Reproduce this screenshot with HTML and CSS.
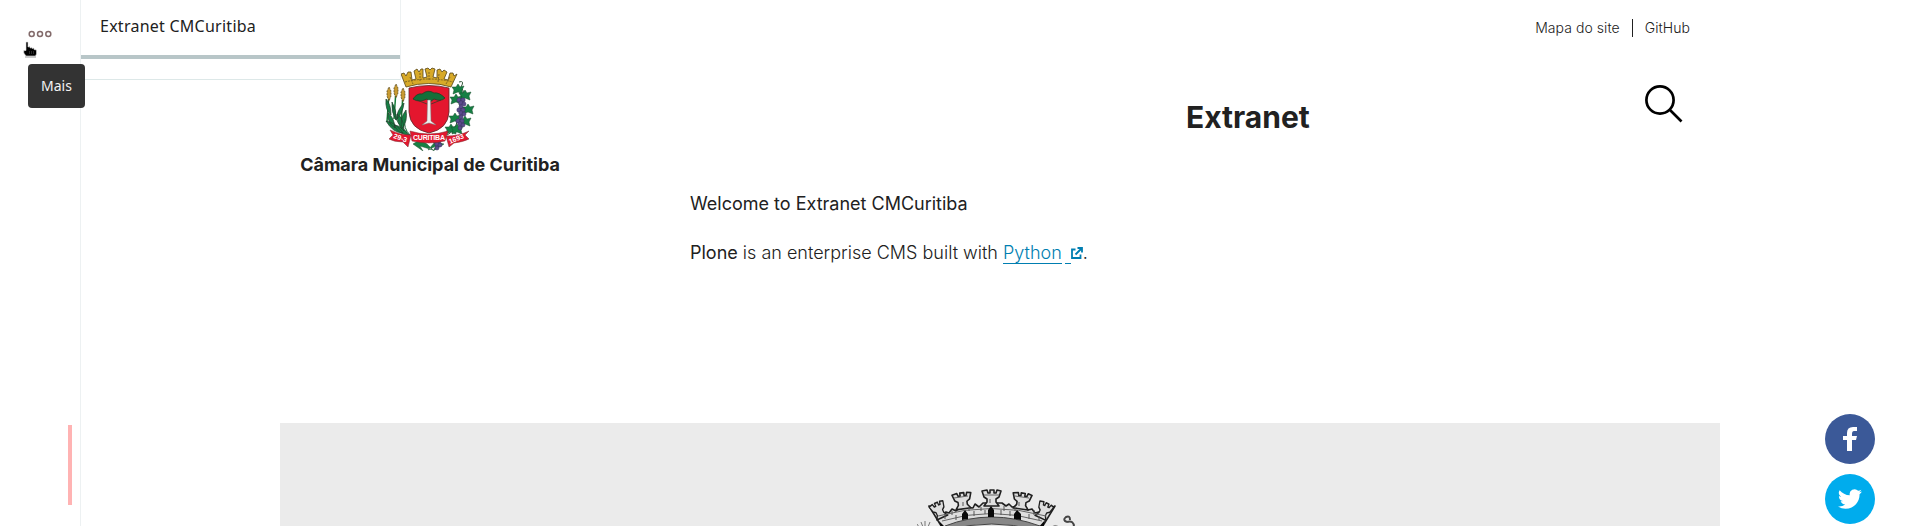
FILE: index.html
```html
<!DOCTYPE html>
<html lang="pt-BR">
<head>
<meta charset="utf-8">
<title>Extranet CMCuritiba</title>
<link rel="stylesheet" href="styles.css">
</head>
<body>
<div class="app">
  <aside class="toolbar">
    <button class="more" aria-label="Mais">
      <svg width="24" height="8" viewBox="0 0 24 8" fill="none" stroke="#826a6a" stroke-width="1.5"><circle cx="3.7" cy="4" r="2.5"/><circle cx="12" cy="4" r="2.5"/><circle cx="20.3" cy="4" r="2.5"/></svg>
    </button>
    <span class="handle"></span>
    <svg class="cursor" width="16" height="17" viewBox="0 0 16 17"><path d="M3 1H5V6L7 5.5V7L9 6.5V7.5L11 7V8.5L13.5 9V13L12.5 15H3L.8 12V9.5H3z" fill="#000" stroke="#ddd" stroke-width=".6"/><path d="M2 16H13" stroke="#999" stroke-width="1"/><path d="M6.5 10V13M8.5 10V13M10.5 10V13" stroke="#555" stroke-width=".5"/></svg>
    <span class="tooltip">Mais</span>
  </aside>
  <div class="page">
    <section class="menu-panel"><h2>Extranet CMCuritiba</h2><div class="menu-body"></div></section>
    <header>
      <nav class="tools"><a>Mapa do site</a><a>GitHub</a></nav>
      <div class="brand-row">
        <div class="brand">
          <svg class="crest" width="90" height="84" viewBox="0 0 90 84">
            <defs>
              <g id="wheat"><path d="M0 34L2 5" stroke="#157a38" stroke-width="1.5"/><path d="M2-1L4 3V8L2 13L0 8V3z" fill="#c79a32" stroke="#5b4b22" stroke-width=".8" stroke-dasharray="2 1"/></g>
              <path id="leaf" d="M0-5L2-2L6-3L4 1L5 5L0 3L-5 5L-4 1L-6-2L-2-2z" fill="#158044" stroke="#174b2b" stroke-width=".5"/>
              <g id="grapes" fill="#5b4b8d" stroke="#35305d" stroke-width=".5"><circle cx="-2" r="2.2"/><circle cx="2" r="2.2"/><circle cy="3" r="2.3"/><circle cx="3" cy="4" r="2"/><circle cy="7" r="2"/></g>
            </defs>
            <g fill="none">
              <use href="#wheat" x="2" y="21"/><use href="#wheat" x="9" y="18"/><use href="#wheat" x="16" y="22"/>
              <g fill="#168044" stroke="#233b2b" stroke-width=".7">
                <path d="M1 32Q6 37 6 48Q0 43 1 32zM3 46Q9 50 10 61Q2 56 3 46zM7 35Q12 43 11 53Q6 45 7 35zM19 36Q18 46 11 53Q12 43 19 36zM12 47Q19 51 19 64Q12 58 12 47zM21 43Q23 54 17 62Q14 52 21 43zM1 54Q10 55 18 66Q8 66 1 54zM9 58Q18 59 24 68Q14 68 9 58z"/>
              </g>
              <path d="M20 52Q18 61 25 68M8 40Q10 56 22 66" stroke="#1a6538"/>
            </g>
            <path d="M74 15Q80 13 76 20Q83 29 74 37Q82 49 72 55Q70 64 62 68" fill="none" stroke="#315437"/>
            <use href="#leaf" x="73" y="22"/><use href="#leaf" x="80" y="28"/><use href="#leaf" x="71" y="32"/><use href="#leaf" x="83" y="42"/><use href="#leaf" x="70" y="51"/><use href="#leaf" x="80" y="54"/><use href="#leaf" x="66" y="62"/><use href="#leaf" x="72" y="62"/>
            <use href="#grapes" x="76" y="33"/><use href="#grapes" x="76" y="43"/><use href="#grapes" x="75" y="54"/>
            <path d="M21 20L16 7L19 6L21 9L23 5L26 5L27 13L31 12L29 4L32 2L34 5L36 2L38 2L38 11L42 10L40 2L43 1L45 3L47 1L50 2L48 10L52 11L52 3L55 2L57 5L59 3L62 5L59 12L63 13L65 6L68 6L69 9L72 7L66 20Q44 13 21 20z" fill="#d7a928" stroke="#574516" stroke-width=".8"/>
            <path d="M20 15Q44 9 68 15M25 10L28 17M35 6V15M44 5V14M54 7L53 15M65 10L61 17" fill="none" stroke="#806520" stroke-dasharray="2 1"/>
            <path d="M24 21Q44 16 64 21V45Q63 62 44 66Q25 62 24 45z" fill="#e4162e" stroke="#5d2729" stroke-width=".8"/>
            <path d="M28 32Q32 26 37 27Q43 22 49 26Q54 25 60 31Q56 35 49 32L45 35L42 32Q34 36 28 32z" fill="#137039" stroke="#263d25" stroke-width=".8"/>
            <path d="M32 33L42 37M56 33L46 37" stroke="#263d25" stroke-width=".7"/>
            <path d="M42.5 33H45.5L46 54L51 58L44 56L37 58L42 54z" fill="#eee" stroke="#777" stroke-width=".5"/>
            <g fill="#178044" stroke="#285034" stroke-width=".5"><path d="M28 77Q35 71 42 77L48 83L35 79L38 84zM59 77L50 75L43 83L51 79L48 84z"/></g>
            <use href="#grapes" x="52" y="74"/>
            <path d="M5 63Q15 68 26 68L23 80L18 75Q9 75 4 72L8 68zM84 64Q74 69 61 69L64 80L69 76Q78 75 84 72L80 68z" fill="#e2172f" stroke="#763033" stroke-width=".5"/>
            <path d="M25 64Q44 70 63 64L60 74Q44 78 27 74z" fill="#e2172f" stroke="#763033" stroke-width=".5"/>
            <g class="ribbon-text"><text x="28" y="73" textLength="32">CURITIBA</text><text x="8" y="71" transform="rotate(18 8 71)">29-3</text><text x="65" y="77" transform="rotate(-22 65 77)">1693</text></g>
          </svg>
          <strong>Câmara Municipal de Curitiba</strong>
        </div>
        <h1>Extranet</h1>
        <svg class="search" width="40" height="40" viewBox="0 0 40 40" fill="none" stroke="#000" stroke-width="2.7"><circle cx="16" cy="15" r="13.6"/><path d="M25.5 24.5L37.5 36.5"/></svg>
      </div>
    </header>
    <main>
      <p class="welcome">Welcome to Extranet CMCuritiba</p>
      <p><b>Plone</b> is an enterprise CMS built with <a>Python</a><span class="external"><svg width="12" height="12" viewBox="0 0 12 12" fill="none" stroke="#007eb1" stroke-width="1.8"><path d="M4.5 2.5H1V11H9.5V7.5M6.5 1H11V5.5M11 1L4.5 7.5"/></svg></span>.</p>
    </main>
    <figure>
      <svg class="seal" width="166" height="38" viewBox="0 0 166 38">
        <defs><path id="tower" d="M-9-1L-4-2L-3 1H-1V-2H3V1H5L6-2L10-1L8 5L5 7V10L8 14H-7L-4 10V7L-7 5z"/></defs>
        <g fill="#dedede" stroke="#202020" stroke-width="1.6" stroke-linejoin="round">
          <path d="M26 40L12 17L26 25L29 23L32 24L35 20L39 22L43 18L56 19L58 15L62 18L66 14H85L89 17L92 15L95 18L108 17L111 21L115 20L118 24L122 23L125 25L138 17L124 40z"/>
          <use href="#tower" x="74" y="3"/><use href="#tower" transform="translate(44 6) rotate(-8)"/><use href="#tower" transform="translate(105 6) rotate(8)"/><use href="#tower" transform="translate(19 16) rotate(-25) scale(.8 1)"/><use href="#tower" transform="translate(129 16) rotate(25) scale(.8 1)"/>
        </g>
        <path d="M28 37Q74 19 123 37L118 41Q75 29 31 41z" fill="#888" stroke="#444"/>
        <path d="M21 27Q74 12 129 27M25 32Q74 17 125 32M67 6H82M37 9L51 7M98 7L112 9" fill="none" stroke="#666"/>
        <path d="M28 25V30M35 22V26M39 26V31M52 18V22M57 22V27M64 18V22M68 21V25M84 21V26M87 17V22M93 22V27M98 18V22M112 25V30M117 21V26M122 27V31M73 10V14M46 13V17M102 13V17" stroke="#555"/>
        <path d="M45 31V25L48 21L51 25V30zM71 28V21L74 17L77 21V28zM97 30V25L100 21L104 25V31zM22 32L30 40H25zM128 31L120 40H126z" fill="#090909"/>
        <path d="M2 38L0 35M6 38L4 33M8 38V32M11 38L13 33M134 38Q138 35 143 38" fill="none" stroke="#777"/>
        <path d="M150 33Q145 31 149 28Q153 26 153 31M150 33Q157 31 157 38" fill="none" stroke="#444" stroke-width="2"/>
      </svg>
    </figure>
  </div>
  <div class="share">
    <a class="facebook" aria-label="Facebook"><svg width="50" height="50" viewBox="0 0 50 50"><path d="M22 37V26H18V22H22V19Q22 13 28 13H32V17H29Q27 17 27 20V22H32L31 26H27V37z" fill="#fff"/></svg></a>
    <a class="twitter" aria-label="Twitter"><svg width="24" height="24" viewBox="0 0 24 24"><path d="M23.95 4.57a10 10 0 0 1-2.82.78 4.96 4.96 0 0 0 2.16-2.72c-.95.56-2 .96-3.13 1.18A4.92 4.92 0 0 0 11.78 8.3C7.69 8.1 4.07 6.13 1.64 3.16a4.92 4.92 0 0 0 1.52 6.57 4.9 4.9 0 0 1-2.23-.61v.06a4.92 4.92 0 0 0 3.95 4.83 4.99 4.99 0 0 1-2.21.08 4.94 4.94 0 0 0 4.6 3.42A9.87 9.87 0 0 1 0 19.54a13.99 13.99 0 0 0 7.56 2.21c9.05 0 14-7.5 14-13.98 0-.21 0-.42-.02-.63a9.94 9.94 0 0 0 2.41-2.57z" fill="#fff"/></svg></a>
  </div>
</div>
</body>
</html>
```
FILE: styles.css
```css
* { box-sizing: border-box; }
body { margin: 0; background: #fff; color: #212121; font-family: Inter, sans-serif; overflow: hidden; }
.app { display: flex; height: 526px; position: relative; }
.toolbar { position: relative; z-index: 2; width: 81px; border-right: 1px solid #edf1f2; display: flex; flex-direction: column; align-items: flex-start; padding: 30px 0 21px 28px; }
.more { background: none; border: 0; padding: 0; height: 8px; display: flex; }
.handle { width: 4px; height: 80px; margin: auto 0 0 40px; background: #ffb3b3; }
.cursor { position: absolute; left: 23px; top: 41px; }
.tooltip { position: absolute; left: 28px; top: 64px; width: 57px; height: 44px; border-radius: 4px; background: #333; color: #f2f2f2; font: 14px/44px "Noto Sans", sans-serif; text-align: center; }
.page { flex: 1; display: flex; flex-direction: column; align-items: flex-start; padding-left: 199px; position: relative; }
.menu-panel { position: absolute; left: -1px; top: 0; width: 321px; height: 80px; background: #fff; border-right: 1px solid #edf1f2; border-bottom: 1px solid #dde8e8; }
.menu-panel h2 { margin: 0; height: 59px; padding: 16px 20px; border-bottom: 4px solid #b8c6c8; font: 400 16px/21px "Noto Sans", sans-serif; letter-spacing: .25px; }
header { width: 1440px; height: 180px; padding: 19px 30px 0 20px; }
.tools { display: flex; justify-content: flex-end; font-size: 14px; font-weight: 300; line-height: 18px; letter-spacing: .06px; }
.tools a + a { border-left: 1px solid #212121; margin-left: 12px; padding-left: 12px; }
.brand-row { display: flex; align-items: flex-start; padding-top: 30px; }
.brand { width: 260px; display: flex; flex-direction: column; align-items: center; font-size: 18px; line-height: 24px; white-space: nowrap; }
.brand strong { margin-top: 2px; }
.ribbon-text { font: bold 7px "Liberation Sans", sans-serif; fill: #fff; }
h1 { margin: 32px 0 0 626px; font-size: 30px; line-height: 36px; }
.search { margin: 18px 6px 0 auto; }
main { width: 620px; height: 243px; margin-left: 410px; padding-top: 10px; font-size: 18px; font-weight: 300; line-height: 27px; }
p { margin: 0 0 22px; }
.welcome { font-weight: 400; }
p b { font-weight: 400; }
p a { color: #007eb1; box-shadow: 0 1px #007eb1; }
.external { display: inline-flex; height: 22px; align-items: center; margin-left: 3px; padding-left: 6px; background: linear-gradient(#007eb1, #007eb1) left bottom / 6px 1px no-repeat; }
figure { margin: 0; width: 1440px; height: 103px; background: #ebebeb; display: flex; padding: 66px 0 0 637px; }
.seal { filter: blur(.35px); }
.share { position: absolute; right: 45px; top: 414px; display: grid; gap: 10px; }
.share a { width: 50px; height: 50px; border-radius: 50%; display: grid; place-items: center; }
.facebook { background: #3b5998; }
.twitter { background: #00aced; }
```
